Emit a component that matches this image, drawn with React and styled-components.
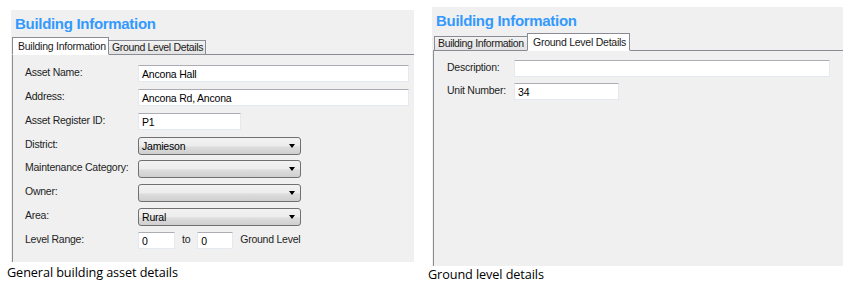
import React from "react";
import styled, { createGlobalStyle } from "styled-components";

const GlobalStyle = createGlobalStyle`
  html, body {
    margin: 0;
    padding: 0;
    background: #ffffff;
  }
  body {
    font-family: "Liberation Sans", Arial, sans-serif;
    width: 859px;
    height: 293px;
    overflow: hidden;
  }
`;

const Page = styled.div`
  display: flex;
  align-items: flex-start;
  padding-left: 7px;
`;

const Figure = styled.div`
  display: flex;
  flex-direction: column;
  width: ${(p) => p.$width}px;
  padding-top: ${(p) => p.$top}px;
`;

const Panel = styled.div`
  margin-left: 4px;
  width: ${(p) => p.$width}px;
  height: ${(p) => p.$height}px;
  background: #f0f0f0;
  overflow: hidden;
  display: flex;
  flex-direction: column;
`;

const Heading = styled.div`
  height: ${(p) => p.$height}px;
  padding: 4px 0 0 4px;
  box-sizing: border-box;
  font-family: "Liberation Sans", Arial, sans-serif;
  font-weight: bold;
  font-size: 15px;
  letter-spacing: -0.3px;
  color: #3399ff;
  line-height: 19px;
`;

const TabStrip = styled.div`
  display: flex;
  align-items: flex-end;
  padding-left: ${(p) => p.$inset}px;
  position: relative;
  z-index: 1;
  margin-bottom: -1px;
`;

const Tab = styled.div`
  box-sizing: border-box;
  width: ${(p) => p.$width}px;
  height: ${(p) => (p.$active ? 18 : 15)}px;
  margin-right: -1px;
  border: 1px solid #898c95;
  border-bottom: ${(p) => (p.$active ? "1px solid #ffffff" : "1px solid #898c95")};
  background: ${(p) =>
    p.$active ? "#ffffff" : "linear-gradient(#f2f2f2, #e3e3e3)"};
  font-size: 10.5px;
  letter-spacing: ${(p) => (p.$active ? "-0.25px" : "-0.35px")};
  color: #1a1a1a;
  padding: ${(p) => (p.$active ? "2px 0 0 5px" : "0 0 0 3px")};
  line-height: 13px;
  white-space: nowrap;
  overflow: hidden;
  z-index: ${(p) => (p.$active ? 2 : 1)};
`;

const TabBody = styled.div`
  flex: 1;
  border-top: 1px solid #898c95;
  border-left: 1px solid #898c95;
  margin-left: ${(p) => p.$inset}px;
  padding: ${(p) => p.$padTop}px 0 0 ${(p) => p.$padLeft}px;
`;

const FieldGrid = styled.div`
  display: grid;
  grid-template-columns: ${(p) => p.$labelWidth}px auto;
  grid-auto-rows: ${(p) => p.$pitch}px;
  align-items: start;
`;

const Label = styled.div`
  font-size: 10.5px;
  letter-spacing: -0.25px;
  color: #1e1e1e;
  line-height: 15px;
  white-space: nowrap;
`;

const TextBox = styled.div`
  box-sizing: border-box;
  width: ${(p) => p.$width}px;
  height: 17px;
  background: #ffffff;
  border: 1px solid #e3e9ef;
  border-top-color: #abadb3;
  border-radius: 1px;
  font-size: 10.5px;
  letter-spacing: -0.2px;
  color: #000;
  line-height: 16px;
  padding-left: 3px;
`;

const Combo = styled.div`
  box-sizing: border-box;
  width: ${(p) => p.$width}px;
  height: 18px;
  border: 1px solid #707070;
  border-radius: 3px;
  background: linear-gradient(#f3f3f3 0%, #ececec 50%, #dddddd 55%, #cfcfcf 100%);
  display: flex;
  align-items: center;
  justify-content: space-between;
  padding: 0 5px 0 3px;
  font-size: 10.5px;
  letter-spacing: -0.2px;
  color: #000;
`;

const Arrow = styled.span`
  width: 0;
  height: 0;
  border-left: 3.5px solid transparent;
  border-right: 3.5px solid transparent;
  border-top: 4px solid #000;
`;

const RangeRow = styled.div`
  display: flex;
  align-items: flex-start;
  gap: 7px;
`;

const Caption = styled.div`
  font-family: "Open Sans", "Liberation Sans", sans-serif;
  font-size: 12.7px;
  color: #000;
  line-height: 16px;
  margin-top: ${(p) => p.$gap}px;
  letter-spacing: -0.1px;
`;

function Tabs({ active, inset }) {
  return (
    <TabStrip $inset={inset}>
      <Tab $active={active === 0} $width={active === 0 ? 97 : 94}>
        Building Information
      </Tab>
      <Tab $active={active === 1} $width={active === 1 ? 103 : 98}>
        Ground Level Details
      </Tab>
    </TabStrip>
  );
}

export default function App() {
  return (
    <>
      <GlobalStyle />
      <Page>
        <Figure $width={421} $top={10}>
          <Panel $width={403} $height={252}>
            <Heading $height={27}>Building Information</Heading>
            <Tabs active={0} inset={1} />
            <TabBody $inset={1} $padTop={10} $padLeft={12}>
              <FieldGrid $labelWidth={113} $pitch={23.86}>
                <Label>Asset Name:</Label>
                <TextBox $width={271}>Ancona Hall</TextBox>
                <Label>Address:</Label>
                <TextBox $width={271}>Ancona Rd, Ancona</TextBox>
                <Label>Asset Register ID:</Label>
                <TextBox $width={103}>P1</TextBox>
                <Label>District:</Label>
                <Combo $width={163}>
                  Jamieson
                  <Arrow />
                </Combo>
                <Label>Maintenance Category:</Label>
                <Combo $width={163}>
                  <span />
                  <Arrow />
                </Combo>
                <Label>Owner:</Label>
                <Combo $width={163}>
                  <span />
                  <Arrow />
                </Combo>
                <Label>Area:</Label>
                <Combo $width={163}>
                  Rural
                  <Arrow />
                </Combo>
                <Label>Level Range:</Label>
                <RangeRow>
                  <TextBox $width={37}>0</TextBox>
                  <Label>to</Label>
                  <TextBox $width={36}>0</TextBox>
                  <Label>Ground Level</Label>
                </RangeRow>
              </FieldGrid>
            </TabBody>
          </Panel>
          <Caption $gap={2}>General building asset details</Caption>
        </Figure>

        <Figure $width={431} $top={7}>
          <Panel $width={411} $height={259}>
            <Heading $height={26}>Building Information</Heading>
            <Tabs active={1} inset={2} />
            <TabBody $inset={1} $padTop={9} $padLeft={13}>
              <FieldGrid $labelWidth={67} $pitch={23}>
                <Label>Description:</Label>
                <TextBox $width={316} />
                <Label>Unit Number:</Label>
                <TextBox $width={105}>34</TextBox>
              </FieldGrid>
            </TabBody>
          </Panel>
          <Caption $gap={0}>Ground level details</Caption>
        </Figure>
      </Page>
    </>
  );
}
